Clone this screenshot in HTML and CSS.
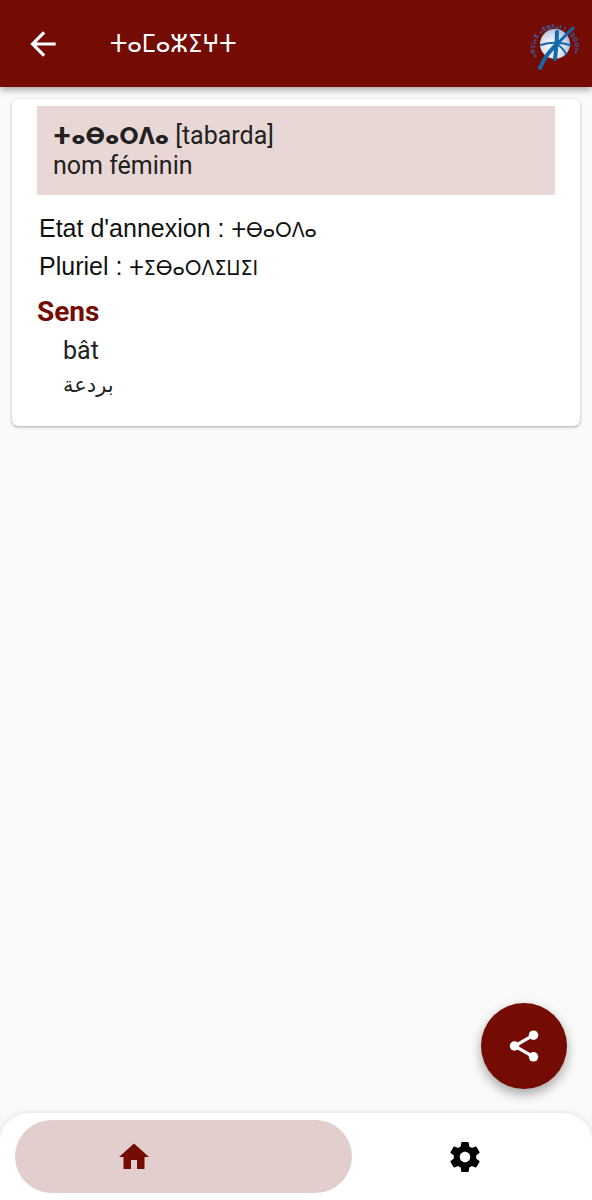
FILE: index.html
```html
<!DOCTYPE html>
<html lang="fr">
<head>
  <meta charset="UTF-8" />
  <meta name="viewport" content="width=device-width, initial-scale=1.0" />
  <title>ⵜⴰⵎⴰⵣⵉⵖⵜ</title>
  <link rel="stylesheet" href="styles.css">
</head>
<body>
  <header class="topbar">
    <a href="#" class="back" aria-label="Retour">
      <svg viewBox="0 0 24 24" width="38" height="38"><path fill="currentColor" d="M20 11H7.83l5.59-5.59L12 4l-8 8 8 8 1.41-1.41L7.83 13H20z"/></svg>
    </a>
    <h1 class="title" lang="zgh">ⵜⴰⵎⴰⵣⵉⵖⵜ</h1>
    <svg class="logo" viewBox="0 0 54 54" width="54" height="54" aria-hidden="true">
      <defs>
        <radialGradient id="globe" cx="42%" cy="60%" r="60%">
          <stop offset="0" stop-color="#ffffff"/>
          <stop offset="0.6" stop-color="#dce3f0"/>
          <stop offset="1" stop-color="#a9c0e0"/>
        </radialGradient>
        <path id="ring" d="M9 40A20 20 0 1 1 46 38A20 20 0 0 1 40 45"/>
      </defs>
      <circle cx="27" cy="27" r="15" fill="url(#globe)"/>
      <text class="logo-text"><textPath href="#ring">ⴰⵙⵉⵏⴰⴳ ⴰⴳⵍⴷⴰⵏ ⵏ ⵜⵓⵙⵙⵏⴰ</textPath></text>
      <g fill="none" stroke="#1368ab" stroke-linecap="round">
        <path stroke-width="4" d="M12 51C16 41 22 33 31 25"/>
        <path stroke-width="3" d="M31 25L45 11"/>
        <path stroke-width="4" d="M29 15C29 26 28 35 27 42"/>
        <path stroke-width="2" d="M13 28C22 25 31 25 42 28"/>
        <path stroke-width="2" d="M29 27C32 29 36 33 38 37"/>
      </g>
    </svg>
  </header>

  <main class="content">
    <article class="card">
      <div class="entry">
        <div><strong class="word" lang="zgh">ⵜⴰⴱⴰⵔⴷⴰ</strong> [tabarda]</div>
        <div>nom féminin</div>
      </div>
      <div class="forms">
        <p>Etat d'annexion : <span class="form" lang="zgh">ⵜⴱⴰⵔⴷⴰ</span></p>
        <p>Pluriel : <span class="form" lang="zgh">ⵜⵉⴱⴰⵔⴷⵉⵡⵉⵏ</span></p>
      </div>
      <h2 class="section">Sens</h2>
      <div class="senses">
        <p>bât</p>
        <p class="arabic" lang="ar"><bdi>بردعة</bdi></p>
      </div>
    </article>
  </main>

  <button class="share" type="button" aria-label="Partager">
    <svg viewBox="0 0 24 24" width="38" height="38">
      <path fill="none" stroke="currentColor" stroke-width="2" d="M17.5 5.5L6 12l11.500 6.500"/>
      <g fill="currentColor">
        <circle cx="18" cy="5.200" r="3"/>
        <circle cx="6" cy="12" r="3"/>
        <circle cx="18" cy="18.800" r="3"/>
      </g>
    </svg>
  </button>

  <nav class="tabs">
    <a href="#" class="tab active" aria-label="Accueil">
      <svg viewBox="0 0 24 24" width="36" height="36"><path fill="currentColor" d="M10 20v-6h4v6h5v-8h3L12 3 2 12h3v8z"/></svg>
    </a>
    <a href="#" class="tab" aria-label="Paramètres">
      <svg viewBox="0 0 24 24" width="36" height="36"><path fill="currentColor" d="M19.430 12.980c.040-.320.070-.640.070-.980s-.030-.660-.070-.980l2.110-1.650c.190-.150.240-.420.120-.640l-2-3.460c-.120-.220-.390-.300-.610-.220l-2.490 1c-.520-.400-1.080-.730-1.690-.980l-.380-2.650C14.460 2.180 14.250 2 14 2h-4c-.250 0-.460.180-.490.420l-.380 2.650c-.610.250-1.170.590-1.690.980l-2.490-1c-.230-.090-.490 0-.610.220l-2 3.460c-.130.220-.070.490.120.640l2.110 1.650c-.040.320-.070.650-.070.980s.030.660.070.980l-2.110 1.650c-.190.150-.240.420-.120.640l2 3.460c.120.220.390.300.610.220l2.490-1c.520.400 1.080.730 1.690.980l.380 2.650c.030.240.240.420.490.420h4c.250 0 .460-.180.490-.420l.380-2.650c.610-.250 1.170-.590 1.690-.980l2.490 1c.230.090.490 0 .610-.220l2-3.460c.120-.220.070-.490-.120-.640l-2.110-1.650zM12 15.500c-1.930 0-3.500-1.570-3.500-3.500s1.570-3.500 3.500-3.500 3.500 1.570 3.500 3.500-1.570 3.500-3.500 3.500z"/></svg>
    </a>
  </nav>
</body>
</html>
```
FILE: styles.css
```css
* {
  box-sizing: border-box;
}

body {
  margin: 0;
  min-height: 100vh;
  display: flex;
  flex-direction: column;
  background: #fafafa;
  color: #212121;
  font-family: Roboto, "Noto Sans", "DejaVu Sans", sans-serif;
  font-size: 25px;
  line-height: 30px;
}

h1, h2, p {
  margin: 0;
}

svg {
  display: block;
}

.topbar {
  display: flex;
  align-items: center;
  height: 87px;
  padding: 0 10px 0 24px;
  background: #740c04;
  color: #fff;
  box-shadow: 0 2px 8px rgba(0, 0, 0, 0.4);
}

.back {
  color: #fff;
}

.title,
.word,
.form,
.logo-text {
  font-family: "DejaVu Sans Condensed", "DejaVu Sans", sans-serif;
}

.title {
  flex: 1;
  margin-left: 48px;
  font-size: 25px;
  font-weight: 400;
}

.logo-text {
  font-size: 6px;
  font-weight: 700;
  fill: #3a5a9a;
}

.content {
  flex: 1;
  padding: 12px;
}

.card {
  padding: 7px 25px 24px;
  background: #fff;
  border-radius: 6px;
  box-shadow: 0 1px 3px rgba(0, 0, 0, 0.35);
}

.entry {
  padding: 15px 16px 14px;
  background: #e9d7d5;
}

.word {
  font-size: 23px;
  font-weight: 700;
  line-height: 1;
}

.forms {
  padding: 14px 2px 0;
  font-family: "Liberation Sans", Arial, sans-serif;
  color: #111;
  line-height: 38px;
}

.form {
  font-size: 21px;
  line-height: 1;
}

.section {
  margin-top: 10px;
  color: #740c04;
  font-size: 28px;
  font-weight: 700;
  line-height: 34px;
}

.senses {
  padding: 5px 26px 0;
  line-height: 34px;
}

.arabic {
  font-family: "DejaVu Sans", sans-serif;
  font-size: 21px;
}

.share {
  position: fixed;
  right: 25px;
  bottom: 111px;
  display: flex;
  align-items: center;
  justify-content: center;
  width: 86px;
  height: 86px;
  padding: 0;
  border: 0;
  border-radius: 50%;
  background: #740c04;
  color: #fff;
  box-shadow: 0 5px 12px rgba(0, 0, 0, 0.35);
}

.tabs {
  display: grid;
  grid-template-columns: 3fr 2fr;
  height: 87px;
  padding: 7px 15px;
  background: #fff;
  border-radius: 28px 28px 0 0;
  box-shadow: 0 0 6px rgba(0, 0, 0, 0.12);
}

.tab {
  display: flex;
  align-items: center;
  justify-content: center;
  border-radius: 37px;
  color: #000;
}

.tab.active {
  padding-right: 100px;
  background: #e2cfcd;
  color: #740c04;
}
```
